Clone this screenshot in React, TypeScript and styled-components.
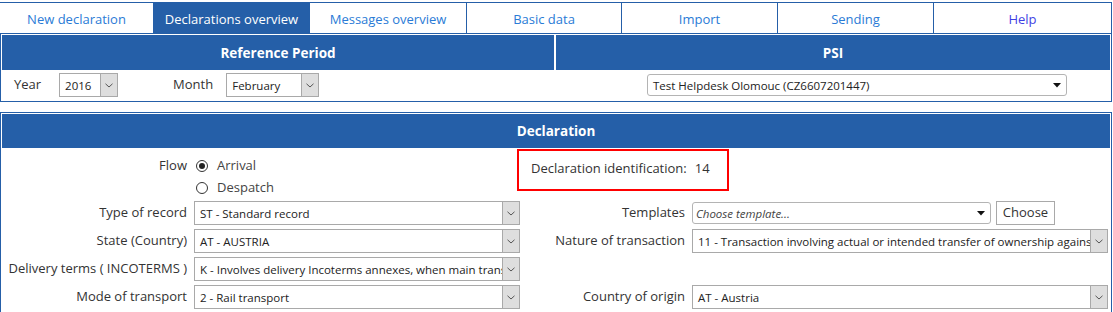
import React from "react";
import styled, { createGlobalStyle, css } from "styled-components";

const BLUE = "#255fa8";
const FONT = `"Open Sans", "Noto Sans", sans-serif`;

const Global = createGlobalStyle`
  html, body { margin: 0; padding: 0; background: #fff; }
  body { font-family: ${FONT}; color: #333; }
`;

const Page = styled.div`
  width: 1112px;
  padding-top: 2px;
`;

const Nav = styled.nav`
  display: grid;
  grid-template-columns: 153px 157px 156px 155px 156px 156px 179px;
  border-top: 1px solid ${BLUE};
  border-bottom: 1px solid ${BLUE};
  height: 30px;
`;

const Tab = styled.a<{ $active?: boolean; $visited?: boolean; $first?: boolean; $last?: boolean }>`
  display: flex;
  align-items: center;
  justify-content: center;
  font-size: 13px;
  text-decoration: none;
  color: ${(p) => (p.$visited ? "#3f3fe4" : "#2a7bd6")};
  border-left: ${(p) => (p.$first ? "none" : `1px solid ${BLUE}`)};
  border-right: ${(p) => (p.$last ? `1px solid ${BLUE}` : "none")};
  padding-top: 1px;
  ${(p) =>
    p.$active &&
    css`
      background: ${BLUE};
      color: #fff;
    `}
`;

const Panel = styled.section<{ $gapTop: number }>`
  border: 1px solid ${BLUE};
  padding: 1px;
  margin-top: ${(p) => p.$gapTop}px;
`;

const HeaderRow = styled.div<{ $cols: string; $h: number }>`
  display: grid;
  grid-template-columns: ${(p) => p.$cols};
  column-gap: 2px;
  height: ${(p) => p.$h}px;
`;

const HeaderCell = styled.div`
  background: ${BLUE};
  color: #fff;
  font-weight: 700;
  font-size: 13.5px;
  display: flex;
  align-items: center;
  justify-content: center;
`;

const PeriodRow = styled.div`
  display: grid;
  grid-template-columns: 1fr 1fr;
  column-gap: 2px;
  height: 30px;
`;

const Cell = styled.div<{ $pl: number }>`
  display: flex;
  align-items: center;
  padding-left: ${(p) => p.$pl}px;
`;

const InlineLabel = styled.span<{ $ml?: number; $mr: number }>`
  font-size: 13px;
  color: #333;
  margin-left: ${(p) => p.$ml ?? 0}px;
  margin-right: ${(p) => p.$mr}px;
  margin-top: -2px;
`;

const SelectBox = styled.div<{ $w: number; $h?: number; $round?: boolean }>`
  display: flex;
  flex: none;
  width: ${(p) => p.$w}px;
  height: ${(p) => p.$h ?? 24}px;
  box-sizing: border-box;
  border: 1px solid ${(p) => (p.$round ? "#b4b4b4" : "#a9a9a9")};
  border-radius: ${(p) => (p.$round ? "3px" : "0")};
  background: #fff;
  font-size: 11.5px;
  color: #222;
  overflow: hidden;
`;

const SelectText = styled.div<{ $placeholder?: boolean }>`
  flex: 1;
  min-width: 0;
  white-space: nowrap;
  overflow: hidden;
  display: flex;
  align-items: center;
  padding-left: 5px;
  ${(p) =>
    p.$placeholder &&
    css`
      font-style: italic;
      color: #444;
      padding-left: 3px;
    `}
`;

const ArrowBox = styled.div`
  width: 16px;
  flex: none;
  background: #dedede;
  border-left: 1px solid #a9a9a9;
  display: flex;
  align-items: center;
  justify-content: center;
`;

const Caret = styled.div`
  width: 18px;
  flex: none;
  display: flex;
  align-items: center;
  justify-content: center;
`;

const Chevron = () => (
  <svg width="8" height="5" viewBox="0 0 8 5">
    <path d="M0.5 0.8 L4 4 L7.5 0.8" fill="none" stroke="#555" strokeWidth="1" />
  </svg>
);

const TriDown = () => (
  <svg width="8" height="5" viewBox="0 0 8 5">
    <path d="M0 0 H8 L4 4.5 Z" fill="#111" />
  </svg>
);

const Select: React.FC<{ w: number; text: string; h?: number }> = ({ w, text, h }) => (
  <SelectBox $w={w} $h={h}>
    <SelectText>{text}</SelectText>
    <ArrowBox>
      <Chevron />
    </ArrowBox>
  </SelectBox>
);

const DropSelect: React.FC<{ w: number; text: string; placeholder?: boolean }> = ({ w, text, placeholder }) => (
  <SelectBox $w={w} $h={22} $round>
    <SelectText $placeholder={placeholder}>{text}</SelectText>
    <Caret>
      <TriDown />
    </Caret>
  </SelectBox>
);

const Form = styled.div`
  display: grid;
  grid-template-columns: 185px 326px 158px 416px;
  column-gap: 7px;
  grid-template-rows: 21px 23px 28px 28px 28px 28px;
  padding-top: 7px;
`;

const Label = styled.div`
  font-size: 13px;
  color: #333;
  text-align: right;
  display: flex;
  align-items: center;
  justify-content: flex-end;
  white-space: nowrap;
  margin-top: -2px;
`;

const FieldCell = styled.div`
  display: flex;
  align-items: center;
  gap: 5px;
  min-width: 0;
`;

const RadioRow = styled.label`
  display: flex;
  align-items: center;
  font-size: 13px;
  color: #444;
  margin-left: 2px;
  gap: 9px;
  margin-top: -2px;
`;

const RadioDot = styled.span<{ $checked?: boolean }>`
  width: 12px;
  height: 12px;
  box-sizing: border-box;
  border-radius: 50%;
  border: 1px solid #333;
  display: inline-flex;
  align-items: center;
  justify-content: center;
  margin-top: 2px;
  &::after {
    content: "";
    width: 6px;
    height: 6px;
    border-radius: 50%;
    background: ${(p) => (p.$checked ? "#222" : "transparent")};
  }
`;

const IdentBox = styled.div`
  grid-column: 3 / 5;
  grid-row: 1 / 3;
  align-self: start;
  margin-top: -6px;
  margin-left: -10px;
  width: 212px;
  height: 42px;
  box-sizing: border-box;
  border: 2px solid #f00;
  display: flex;
  align-items: center;
  padding-left: 12px;
  font-size: 13px;
  color: #333;
  gap: 8px;
  padding-bottom: 4px;
`;

const Button = styled.button`
  height: 24px;
  width: 59px;
  flex: none;
  box-sizing: border-box;
  border: 1px solid #a9a9a9;
  background: #fff;
  font-family: ${FONT};
  font-size: 13px;
  color: #333;
  padding: 0 0 2px;
`;

export default function App() {
  const tabs = [
    "New declaration",
    "Declarations overview",
    "Messages overview",
    "Basic data",
    "Import",
    "Sending",
    "Help",
  ];
  return (
    <Page>
      <Global />
      <Nav>
        {tabs.map((t, i) => (
          <Tab key={t} href="#" $active={i === 1} $first={i <= 2} $last={i === 6} $visited={i === 6}>
            {t}
          </Tab>
        ))}
      </Nav>
      <Panel $gapTop={-1}>
        <HeaderRow $cols="552px 1fr" $h={35}>
          <HeaderCell>Reference Period</HeaderCell>
          <HeaderCell>PSI</HeaderCell>
        </HeaderRow>
        <PeriodRow>
          <Cell $pl={12}>
            <InlineLabel $mr={18}>Year</InlineLabel>
            <Select w={59} text="2016" />
            <InlineLabel $ml={55} $mr={13}>Month</InlineLabel>
            <Select w={93} text="February" />
          </Cell>
          <Cell $pl={90}>
            <DropSelect w={420} text="Test Helpdesk Olomouc (CZ6607201447)" />
          </Cell>
        </PeriodRow>
      </Panel>
      <Panel $gapTop={10}>
        <HeaderRow $cols="1fr" $h={34}>
          <HeaderCell>Declaration</HeaderCell>
        </HeaderRow>
        <Form>
          <Label>Flow</Label>
          <FieldCell>
            <RadioRow>
              <RadioDot $checked />
              Arrival
            </RadioRow>
          </FieldCell>
          <IdentBox>
            <span>Declaration identification:</span>
            <span>14</span>
          </IdentBox>

          <div />
          <FieldCell>
            <RadioRow>
              <RadioDot />
              Despatch
            </RadioRow>
          </FieldCell>

          <Label>Type of record</Label>
          <FieldCell>
            <Select w={326} text="ST - Standard record" />
          </FieldCell>
          <Label>Templates</Label>
          <FieldCell>
            <DropSelect w={299} text="Choose template..." placeholder />
            <Button>Choose</Button>
          </FieldCell>

          <Label>State (Country)</Label>
          <FieldCell>
            <Select w={326} text="AT - AUSTRIA" />
          </FieldCell>
          <Label>Nature of transaction</Label>
          <FieldCell>
            <Select w={416} text="11 - Transaction involving actual or intended transfer of ownership against consideration" />
          </FieldCell>

          <Label>Delivery terms ( INCOTERMS )</Label>
          <FieldCell>
            <Select w={326} text="K - Involves delivery Incoterms annexes, when main transport is paid" />
          </FieldCell>
          <div />
          <div />

          <Label>Mode of transport</Label>
          <FieldCell>
            <Select w={326} text="2 - Rail transport" />
          </FieldCell>
          <Label>Country of origin</Label>
          <FieldCell>
            <Select w={416} text="AT - Austria" />
          </FieldCell>
        </Form>
      </Panel>
    </Page>
  );
}
